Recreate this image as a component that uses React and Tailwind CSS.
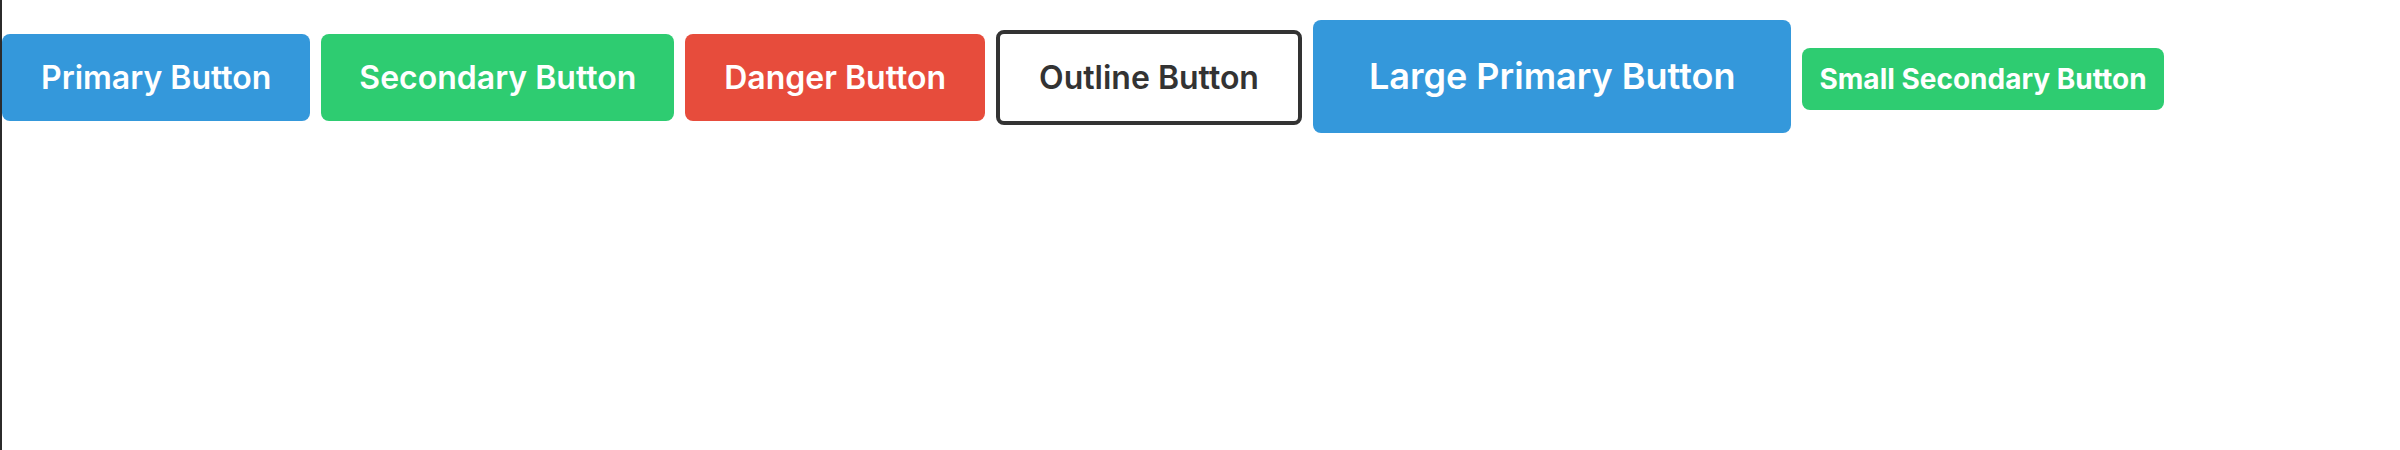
const buttons = [
  { label: "Primary Button", cls: "bg-[#3498db] text-white text-[32px] font-semibold px-[39px] py-[24px] leading-[39px]" },
  { label: "Secondary Button", cls: "bg-[#2ecc71] text-white text-[32px] font-semibold px-[38px] py-[24px] leading-[39px]" },
  { label: "Danger Button", cls: "bg-[#e74c3c] text-white text-[32px] font-semibold px-[39px] py-[24px] leading-[39px]" },
  { label: "Outline Button", cls: "bg-white text-[#333] border-4 border-[#333] text-[32px] font-semibold px-[39px] py-[24px] leading-[39px]" },
  { label: "Large Primary Button", cls: "bg-[#3498db] text-white text-[36px] font-semibold px-[56px] py-[35px] leading-[43px]" },
  { label: "Small Secondary Button", cls: "bg-[#2ecc71] text-white text-[28px] font-bold px-[17px] py-[14px] leading-[34px]" },
];

export default function App() {
  return (
    <div className="h-[450px] bg-white border-l-2 border-[#2b2b2b] font-['Inter','Noto_Sans',sans-serif]">
      <div className="flex items-baseline gap-[11px] pt-[20px]">
        {buttons.map((b) => (
          <button key={b.label} className={`${b.cls} rounded-[8px] whitespace-nowrap`}>
            {b.label}
          </button>
        ))}
      </div>
    </div>
  );
}
